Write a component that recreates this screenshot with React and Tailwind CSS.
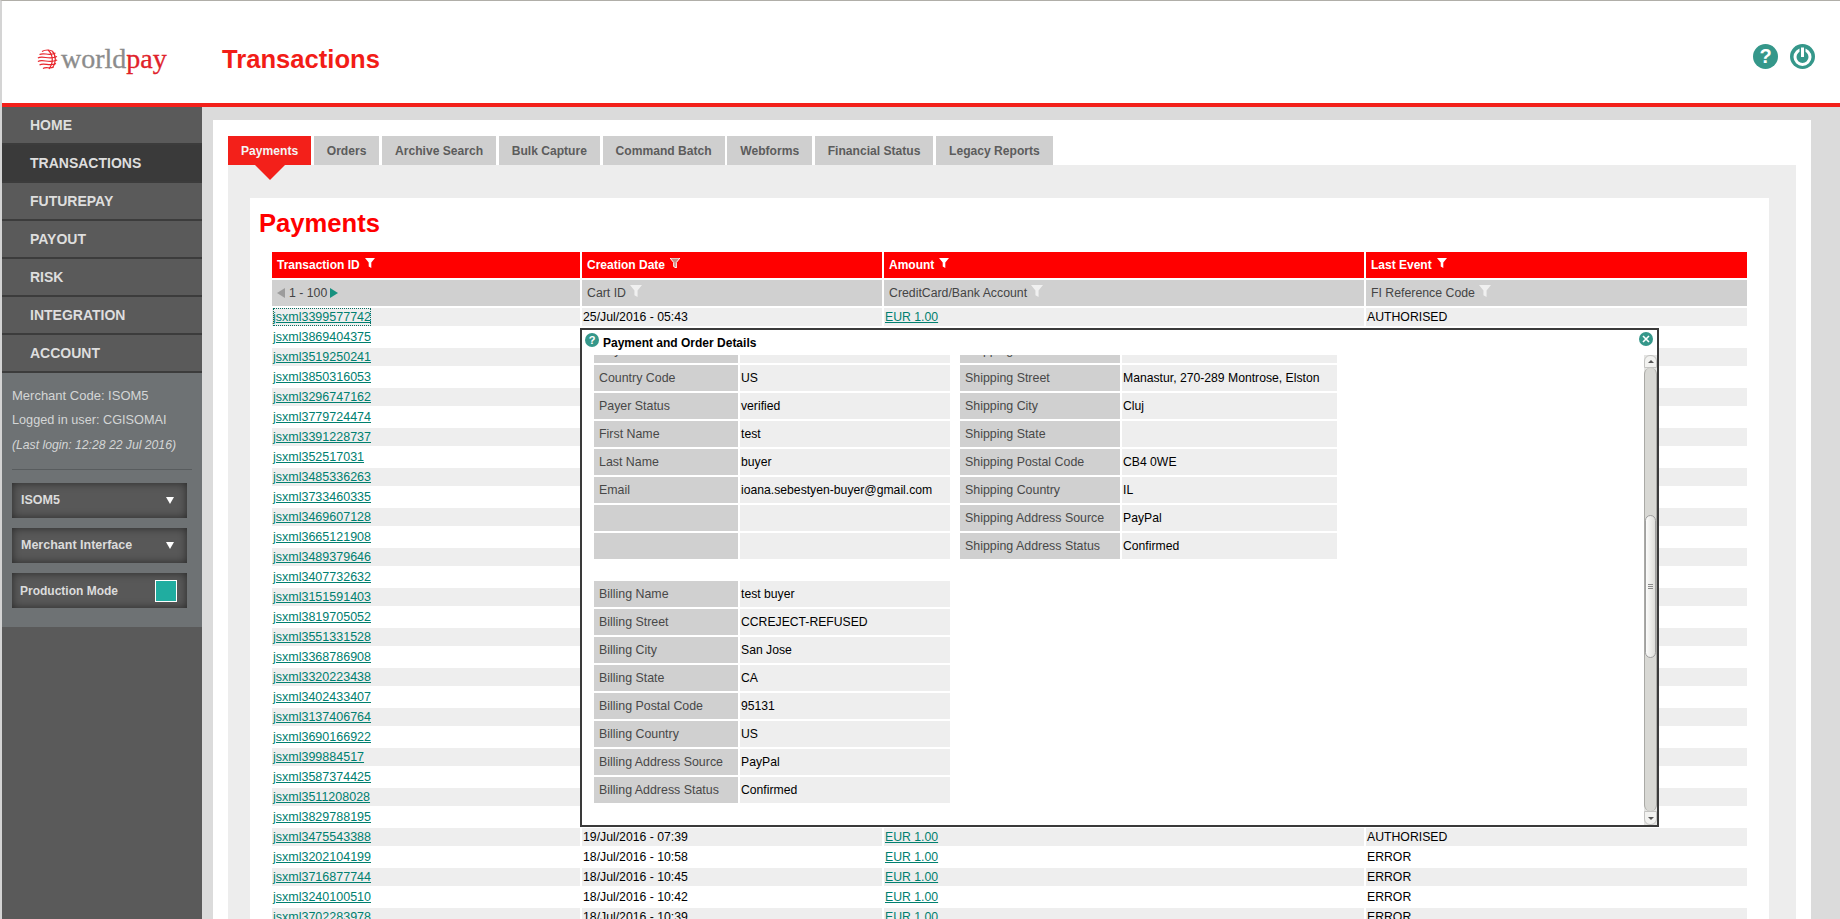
const navItems = ["HOME", "TRANSACTIONS", "FUTUREPAY", "PAYOUT", "RISK", "INTEGRATION", "ACCOUNT"];
const tabs = ["Payments", "Orders", "Archive Search", "Bulk Capture", "Command Batch", "Webforms", "Financial Status", "Legacy Reports"];

const rows = [
  { id: "3399577742", date: "25/Jul/2016 - 05:43", amount: "EUR 1.00", event: "AUTHORISED" },
  { id: "3869404375" }, { id: "3519250241" }, { id: "3850316053" }, { id: "3296747162" },
  { id: "3779724474" }, { id: "3391228737" }, { id: "352517031" }, { id: "3485336263" },
  { id: "3733460335" }, { id: "3469607128" }, { id: "3665121908" }, { id: "3489379646" },
  { id: "3407732632" }, { id: "3151591403" }, { id: "3819705052" }, { id: "3551331528" },
  { id: "3368786908" }, { id: "3320223438" }, { id: "3402433407" }, { id: "3137406764" },
  { id: "3690166922" }, { id: "399884517" }, { id: "3587374425" }, { id: "3511208028" },
  { id: "3829788195" },
  { id: "3475543388", date: "19/Jul/2016 - 07:39", amount: "EUR 1.00", event: "AUTHORISED" },
  { id: "3202104199", date: "18/Jul/2016 - 10:58", amount: "EUR 1.00", event: "ERROR" },
  { id: "3716877744", date: "18/Jul/2016 - 10:45", amount: "EUR 1.00", event: "ERROR" },
  { id: "3240100510", date: "18/Jul/2016 - 10:42", amount: "EUR 1.00", event: "ERROR" },
  { id: "3702283978", date: "18/Jul/2016 - 10:39", amount: "EUR 1.00", event: "ERROR" },
];

const payer = [
  ["Payer ID", ""], ["Country Code", "US"], ["Payer Status", "verified"], ["First Name", "test"],
  ["Last Name", "buyer"], ["Email", "ioana.sebestyen-buyer@gmail.com"], ["", ""], ["", ""],
];
const billing = [
  ["Billing Name", "test buyer"], ["Billing Street", "CCREJECT-REFUSED"], ["Billing City", "San Jose"],
  ["Billing State", "CA"], ["Billing Postal Code", "95131"], ["Billing Country", "US"],
  ["Billing Address Source", "PayPal"], ["Billing Address Status", "Confirmed"],
];
const shipping = [
  ["Shipping Name", ""], ["Shipping Street", "Manastur, 270-289 Montrose, Elston"], ["Shipping City", "Cluj"],
  ["Shipping State", ""], ["Shipping Postal Code", "CB4 0WE"], ["Shipping Country", "IL"],
  ["Shipping Address Source", "PayPal"], ["Shipping Address Status", "Confirmed"],
];

const tableCols = "grid grid-cols-[308px_300px_480px_381px] gap-x-0.5";

function Globe() {
  return (
    <svg width="21" height="21" viewBox="0 0 21 21" fill="none" stroke="#e8262c" strokeWidth="1.2">
      <path d="M5 2.5 C8 0.5 13 0.5 16 2.5" />
      <path d="M2.5 5.5 C7 3 12 7.5 18.5 4" />
      <path d="M0.9 9 C6 6 12 11.5 20 7.5" />
      <path d="M0.9 12.5 C6 9.5 12 15 20.2 11" />
      <path d="M2.5 16 C7 13 12.5 18 19 14.5" />
      <path d="M6 19.5 C9 17.5 13 20 16.5 18" />
      <path d="M11 1 C16.5 6 16.5 14 12 20" />
      <path d="M15.5 2.5 C19.5 7 19 14 15.5 19" />
    </svg>
  );
}

function Funnel({ className = "", fill = "#fff", stroke = "none", size = 10 }) {
  return (
    <svg width={size} height={size} viewBox="0 0 10 10" className={className}>
      <path d="M0 0H10L6.3 4.5V10L3.7 8.6V4.5Z" fill={fill} stroke={stroke} strokeWidth="1" />
    </svg>
  );
}

function DownArrow() {
  return <span className="w-0 h-0 border-x-[4.5px] border-t-[7px] border-x-transparent border-t-white" />;
}

function SideBox({ children, className = "" }) {
  return (
    <div className={`h-[35px] w-[175px] flex items-center justify-between bg-[#585858] shadow-[inset_0_0_8px_rgba(0,0,0,0.55)] text-[#dcdcdc] font-bold ${className}`}>
      {children}
    </div>
  );
}

function Sidebar() {
  return (
    <aside className="w-[200px] shrink-0 bg-[#5a5a5a] flex flex-col">
      <nav>
        {navItems.map((item) => (
          <div
            key={item}
            className={`h-[38px] pl-7 flex items-center text-sm font-bold text-[#dedede] border-b-2 border-[#3c3c3c] ${item === "TRANSACTIONS" ? "bg-[#3a3a3a]" : "bg-[#5a5a5a]"}`}
          >
            {item}
          </div>
        ))}
      </nav>
      <div className="h-[254px] bg-[#6e7274] px-2.5 pt-2.5 text-[13px] text-[#d4d6d6]">
        <p className="h-[25px] leading-[25px]">Merchant Code: ISOM5</p>
        <p className="h-[25px] leading-[25px] text-[12.7px]">Logged in user: CGISOMAI</p>
        <p className="h-6 leading-6 italic text-[12.2px]">(Last login: 12:28 22 Jul 2016)</p>
        <div className="mt-3 mb-[13px] border-t border-[#585c5e]" />
        <div className="flex flex-col gap-2.5">
          <SideBox className="pl-[9px] pr-[13px] text-[12.5px]">ISOM5 <DownArrow /></SideBox>
          <SideBox className="pl-[9px] pr-[13px] text-[12.5px]">Merchant Interface <DownArrow /></SideBox>
          <SideBox className="pl-2 pr-2.5 text-xs">
            Production Mode
            <span className="w-[22px] h-[22px] bg-[#20ada0] border border-white" />
          </SideBox>
        </div>
      </div>
    </aside>
  );
}

function Tabs() {
  return (
    <div className="flex gap-[2.6px] h-[29px] shrink-0">
      {tabs.map((tab, i) => (
        <div
          key={tab}
          className={`relative px-[13px] pt-px flex items-center text-[12.1px] font-bold ${i === 0 ? "bg-[#f3201a] text-[#f4f4f4]" : "bg-[#cfcfcf] text-[#5c5c5c]"}`}
        >
          {tab}
          {i === 0 && (
            <span className="absolute left-[27px] top-full w-0 h-0 border-x-[15px] border-t-[15px] border-x-transparent border-t-[#f3201a]" />
          )}
        </div>
      ))}
    </div>
  );
}

function PaymentsTable() {
  return (
    <div className="mx-[22px] flex flex-col gap-y-0.5">
      <div className={`${tableCols} h-[26px] shrink-0 text-xs font-bold text-white`}>
        <div className="bg-[#ff0000] pl-[5px] flex items-center gap-[5px]">Transaction ID <Funnel className="-mt-1" /></div>
        <div className="bg-[#ff0000] pl-[5px] flex items-center gap-[5px]">Creation Date <Funnel className="-mt-1" fill="#c98a80" stroke="#fff" /></div>
        <div className="bg-[#ff0000] pl-[5px] flex items-center gap-[5px]">Amount <Funnel className="-mt-1" /></div>
        <div className="bg-[#ff0000] pl-[5px] flex items-center gap-[5px]">Last Event <Funnel className="-mt-1" /></div>
      </div>
      <div className={`${tableCols} h-[26px] shrink-0 text-[12.3px] text-[#444]`}>
        <div className="bg-[#d0d0d0] pl-[5px] flex items-center">
          <span className="w-0 h-0 border-y-[5px] border-r-[8px] border-y-transparent border-r-[#9c9c9c]" />
          <span className="ml-1 mr-[3px]">1 - 100</span>
          <span className="w-0 h-0 border-y-[5px] border-l-[8px] border-y-transparent border-l-[#17917f]" />
        </div>
        <div className="bg-[#d0d0d0] pl-[5px] flex items-center gap-1">Cart ID <Funnel className="-mt-1" fill="#f0f0f0" size={12} /></div>
        <div className="bg-[#d0d0d0] pl-[5px] flex items-center gap-1">CreditCard/Bank Account <Funnel className="-mt-1" fill="#f0f0f0" size={12} /></div>
        <div className="bg-[#d0d0d0] pl-[5px] flex items-center gap-1">FI Reference Code <Funnel className="-mt-1" fill="#f0f0f0" size={12} /></div>
      </div>
      {rows.map((row, i) => (
        <div key={row.id} className={`${tableCols} h-[18px] leading-[18px] shrink-0 text-[12.25px] text-black`}>
          <div className={`pl-px text-[12.5px] ${i % 2 === 0 ? "bg-[#eeeeee]" : "bg-white"}`}>
            <a href="#" className={`text-[#00806f] underline ${i === 0 ? "inline-block outline-1 outline-dotted outline-[#0a6f62] -outline-offset-1" : ""}`}>
              jsxml{row.id}
            </a>
          </div>
          <div className={`pl-px ${i % 2 === 0 ? "bg-[#eeeeee]" : "bg-white"}`}>{row.date}</div>
          <div className={`pl-px ${i % 2 === 0 ? "bg-[#eeeeee]" : "bg-white"}`}>
            {row.amount && <a href="#" className="text-[#00806f] underline">{row.amount}</a>}
          </div>
          <div className={`pl-px ${i % 2 === 0 ? "bg-[#eeeeee]" : "bg-white"}`}>{row.event}</div>
        </div>
      ))}
    </div>
  );
}

function DetailRows({ items, cols }) {
  return (
    <div className={`grid ${cols} gap-0.5 auto-rows-[26px] leading-[26px]`}>
      {items.map(([label, value], i) => (
        <div key={i} className="contents">
          <div className="bg-[#d0d0d0] pl-[5px] text-[12.4px] text-[#484848]">{label}</div>
          <div className="bg-[#eeeeee] pl-px text-[12.2px] text-black">{value}</div>
        </div>
      ))}
    </div>
  );
}

function Scrollbar() {
  return (
    <div className="w-[13px] shrink-0 flex flex-col bg-[#e4e4e2]">
      <div className="h-[13px] flex items-center justify-center rounded-t-md border border-[#c4c4c2] bg-[#f2f2f0]">
        <span className="w-0 h-0 border-x-[3px] border-b-[3px] border-x-transparent border-b-[#555]" />
      </div>
      <div className="flex-1 border-x border-[#aaaaa6] bg-[#d8d8d4] rounded-md">
        <div className="mt-[147px] h-[143px] rounded-md border border-[#a0a0a0] bg-gradient-to-r from-[#fbfbfa] to-[#dededa] flex flex-col items-center justify-center gap-px">
          <span className="w-[5px] h-px bg-[#8a8a8a]" />
          <span className="w-[5px] h-px bg-[#8a8a8a]" />
          <span className="w-[5px] h-px bg-[#8a8a8a]" />
        </div>
      </div>
      <div className="h-[14px] flex items-center justify-center rounded-b-md border border-[#c4c4c2] bg-[#f2f2f0]">
        <span className="w-0 h-0 border-x-[3px] border-t-[3px] border-x-transparent border-t-[#555]" />
      </div>
    </div>
  );
}

function DetailsModal() {
  return (
    <div className="absolute left-[580px] top-[328px] w-[1079px] h-[499px] border-2 border-[#3a3a3a] bg-white flex flex-col">
      <div className="h-[25px] shrink-0 relative flex items-center pl-[21px] text-xs font-bold text-black">
        <span className="absolute left-[3px] top-[3px] w-[14px] h-[14px] rounded-full bg-[#35978a] text-white text-[11px] leading-[14px] text-center">?</span>
        Payment and Order Details
        <svg className="absolute right-1 top-[2px]" width="14" height="14" viewBox="0 0 14 14">
          <circle cx="7" cy="7" r="7" fill="#35978a" />
          <path d="M4 4L10 10M10 4L4 10" stroke="#fff" strokeWidth="1.6" />
        </svg>
      </div>
      <div className="flex-1 min-h-0 flex">
        <div className="flex-1 overflow-hidden pl-3">
          <div className="-mt-[18px] flex gap-2.5">
            <div className="flex flex-col gap-[22px]">
              <DetailRows items={payer} cols="grid-cols-[144px_210px]" />
              <DetailRows items={billing} cols="grid-cols-[144px_210px]" />
            </div>
            <div>
              <DetailRows items={shipping} cols="grid-cols-[160px_215px]" />
            </div>
          </div>
        </div>
        <Scrollbar />
      </div>
    </div>
  );
}

export default function App() {
  return (
    <div className="relative h-screen overflow-hidden font-['Liberation_Sans',Arial,sans-serif]">
      <div className="h-full flex flex-col border-t border-l-2 border-t-[#b0aea8] border-l-[#d4d4d4]">
        <header className="h-[106px] shrink-0 bg-white border-b-4 border-[#f3201a] pt-3.5 flex items-center">
          <div className="ml-[35px] flex items-center gap-[3px] w-[185px]">
            <Globe />
            <span className="text-[28px] leading-none font-['Liberation_Serif',serif] [-webkit-text-stroke:0.3px] text-[#8c8c8c]">
              world<span className="text-[#e0222a]">pay</span>
            </span>
          </div>
          <h1 className="text-[25.6px] font-bold text-[#f21d17]">Transactions</h1>
          <div className="ml-auto mr-[25px] -mt-[5px] flex gap-3">
            <span className="w-[25px] h-[25px] rounded-full bg-[#35978a] text-white text-xl font-bold leading-[25px] text-center">?</span>
            <svg width="25" height="25" viewBox="0 0 25 25">
              <circle cx="12.5" cy="12.5" r="12.5" fill="#35978a" />
              <circle cx="12.5" cy="13" r="7.5" fill="none" stroke="#fff" strokeWidth="3" />
              <path d="M12.5 3V13" stroke="#35978a" strokeWidth="6" />
              <path d="M12.5 3.5V13" stroke="#fff" strokeWidth="3" />
            </svg>
          </div>
        </header>
        <div className="flex-1 min-h-0 flex">
          <Sidebar />
          <main className="flex-1 flex bg-[#dbdbdb] pl-[11px] pr-[29px] pt-[13px]">
            <div className="flex-1 bg-white px-[15px] pt-4 flex flex-col">
              <Tabs />
              <div className="flex-1 min-h-0 bg-[#ededed] pl-[22px] pr-[27px] pt-[33px] flex flex-col">
                <div className="flex-1 min-h-0 bg-white">
                  <h2 className="h-[54px] pt-2.5 pl-[9px] text-[25.6px] leading-[30px] font-bold text-[#ff0000]">Payments</h2>
                  <PaymentsTable />
                </div>
              </div>
            </div>
          </main>
        </div>
      </div>
      <DetailsModal />
    </div>
  );
}
